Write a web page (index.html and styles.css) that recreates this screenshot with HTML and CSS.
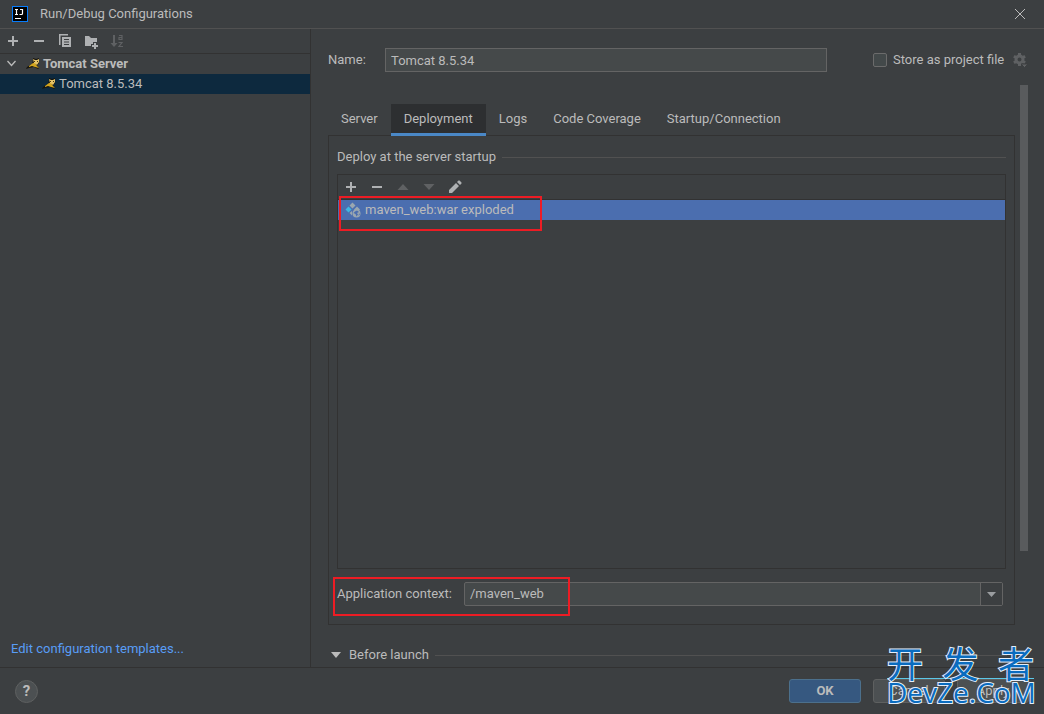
FILE: index.html
```html
<!DOCTYPE html>
<html lang="en">
  <head>
    <meta charset="utf-8">
    <title>Run/Debug Configurations</title>
    <link rel="stylesheet" href="styles.css">
  </head>
  <body>
    <svg class="symbols" xmlns="http://www.w3.org/2000/svg">
      <symbol id="plus" viewBox="0 0 16 16"><path d="M7 3h2v4h4v2H9v4H7V9H3V7h4z"/></symbol>
      <symbol id="minus" viewBox="0 0 16 16"><path d="M3 7h10v2H3z"/></symbol>
      <symbol id="up" viewBox="0 0 16 16"><path d="M2.500 11h11L8 5z"/></symbol>
      <symbol id="down" viewBox="0 0 16 16"><path d="M2.500 5h11L8 11z"/></symbol>
      <symbol id="tomcat" viewBox="0 0 16 16">
        <path fill="#17140d" d="M2 11l5-3 1-4 0-2 3 1 3-1 0 5-2 3 2 2-1 1-4-2-5 1-3 1z"/>
        <path fill="#d2a41e" d="M4 10l4-3 2 0 2 3 2 2-4-1-3-1-3 1z"/>
        <path fill="#e6c468" d="M8 3l2 1h2l2-1v3l-2 3-3-2z"/>
        <path fill="#4a3810" d="M9 5h1v1H9zM12 5h1v1h-1z"/>
      </symbol>
    </svg>

    <div class="dialog">
      <header class="titlebar">
        <svg class="logo" viewBox="0 0 16 16">
          <path fill="#087cfa" d="M0 0h16v16H0z"/>
          <path fill="#000" d="M1 1h14v14H1z"/>
          <path fill="none" stroke="#fff" stroke-width="1.200" d="M3 3.500h3M4.500 3.500v5M3 8.500h3M8 3.500h2.500v4q0 1-1 1H7.500"/>
          <path fill="#fff" d="M3 12h6v1H3z"/>
        </svg>
        <h1 class="title">Run/Debug Configurations</h1>
        <button class="icon-btn" aria-label="Close">
          <svg class="icon" viewBox="0 0 16 16"><path fill="none" stroke="#bbb" d="M3 3l10 10M13 3L3 13"/></svg>
        </button>
      </header>

      <div class="body">
        <aside class="sidebar">
          <div class="toolbar">
            <button class="icon-btn" aria-label="Add"><svg class="icon"><use href="#plus"/></svg></button>
            <button class="icon-btn" aria-label="Remove"><svg class="icon"><use href="#minus"/></svg></button>
            <button class="icon-btn" aria-label="Copy">
              <svg class="icon" viewBox="0 0 16 16"><path d="M2 1h9v1.500H3.500V12H2z"/><path fill-rule="evenodd" d="M5 4h9v10H5zM7 6v1h5V6zM7 8.500v1h5v-1zM7 11v1h5v-1z"/></svg>
            </button>
            <button class="icon-btn" aria-label="New folder">
              <svg class="icon" viewBox="0 0 16 16"><path d="M2 3h4l2 2h6v4h-4v2H8v2H2z"/><path d="M11 10h2v2h2v2h-2v2h-2v-2H9v-2h2z"/></svg>
            </button>
            <button class="icon-btn" aria-label="Sort" disabled>
              <svg class="icon" viewBox="0 0 16 16"><path d="M4 2h2v8h2.500L5 14 1.500 10H4z"/><path fill="none" stroke="currentColor" stroke-width="1.200" d="M10 2.500h3V6.500h-3V4.500h3M9.500 9.500h3.500L10 13.500h4"/></svg>
            </button>
          </div>
          <ul class="tree">
            <li class="node">
              <svg class="icon" viewBox="0 0 16 16"><path fill="none" stroke="currentColor" stroke-width="1.300" d="M3.500 5l4 4.500 4-4.500"/></svg>
              <svg class="icon cat"><use href="#tomcat"/></svg>
              <b>Tomcat Server</b>
            </li>
            <li class="node child selected">
              <svg class="icon cat"><use href="#tomcat"/></svg>
              Tomcat 8.5.34
            </li>
          </ul>
          <a class="templates" href="#">Edit configuration templates...</a>
        </aside>

        <main class="config">
          <div class="name-row">
            <label class="name-label" for="name">Name:</label>
            <input class="field name" type="text" id="name" value="Tomcat 8.5.34">
            <div class="store">
              <input class="check" type="checkbox" id="store">
              <label for="store">Store as project file</label>
              <svg class="icon gear" viewBox="0 0 16 16">
                <circle cx="7.500" cy="7.500" r="3.500" fill="none" stroke="currentColor" stroke-width="3"/>
                <path fill="none" stroke="currentColor" stroke-width="3" d="M7.500 1v3M7.500 11v3M1.900 4.250l2.600 1.500M10.500 9.250l2.600 1.500M1.900 10.750l2.600-1.500M10.500 5.750l2.600-1.500"/>
                <path stroke="#3c3f41" d="M9 12h7l-3.500 3.500z"/>
              </svg>
            </div>
          </div>

          <div class="scroll">
            <div class="content">
              <nav class="tabs">
                <button class="tab">Server</button>
                <button class="tab active">Deployment</button>
                <button class="tab">Logs</button>
                <button class="tab">Code Coverage</button>
                <button class="tab">Startup/Connection</button>
              </nav>

              <section class="panel">
                <h2 class="group">Deploy at the server startup</h2>
                <div class="artifacts">
                  <div class="toolbar">
                    <button class="icon-btn" aria-label="Add"><svg class="icon"><use href="#plus"/></svg></button>
                    <button class="icon-btn" aria-label="Remove"><svg class="icon"><use href="#minus"/></svg></button>
                    <button class="icon-btn" aria-label="Up" disabled><svg class="icon"><use href="#up"/></svg></button>
                    <button class="icon-btn" aria-label="Down" disabled><svg class="icon"><use href="#down"/></svg></button>
                    <button class="icon-btn" aria-label="Edit">
                      <svg class="icon" viewBox="0 0 16 16"><path d="M2 11l7-7 3 3-7 7H2zM10 3l1.500-1.500h1L14.500 3.500v1L13 6z"/></svg>
                    </button>
                  </div>
                  <ul class="list">
                    <li class="artifact">
                      <svg class="icon" viewBox="0 0 16 16">
                        <path fill="#9aa7b0" d="M7.500.5l3 3-3 3-3-3zM12 4.500l3 3-1 1-4 0-1-1z"/>
                        <path fill="#40b6e0" d="M3.500 4.500l3 3-3 3-3-3z"/>
                        <path fill="#9aa7b0" d="M7 9l0 4.500-2.500-2.500z"/>
                        <circle cx="11.500" cy="11.500" r="4" fill="#9aa7b0"/>
                        <path fill="#4b6eaf" d="M10 9.500l2-1 2 1.500-2 1 1 1.500-1.500 2-1-2.500-2-1zM14 11.500l1 .5-1.500 2z"/>
                      </svg>
                      maven_web:war exploded
                      <span class="mark mark-artifact"></span>
                    </li>
                  </ul>
                </div>
                <div class="context">
                  <label class="context-label" for="context">Application context:</label>
                  <div class="combo">
                    <select class="field" id="context"><option>/maven_web</option></select>
                    <svg class="arrow" viewBox="0 0 22 22"><path stroke="#646464" d="M.5 0v22"/><path d="M7 9h9l-4.500 5z"/></svg>
                  </div>
                  <span class="mark mark-context"></span>
                </div>
              </section>

              <h2 class="group before">
                <svg class="icon" viewBox="0 0 16 16"><path d="M3 5h10l-5 6z"/></svg>
                Before launch
              </h2>
            </div>
            <div class="scrollbar"></div>
          </div>
        </main>
      </div>

      <footer class="footer">
        <button class="help" aria-label="Help">?</button>
        <button class="btn primary">OK</button>
        <button class="btn">Cancel</button>
        <button class="btn">Apply</button>
      </footer>
    </div>

    <div class="watermark">
      <div class="watermark-top"><span>开</span><span>发</span><span>者</span></div>
      <div class="watermark-bottom">DevZe.CoM</div>
    </div>
  </body>
</html>
```
FILE: styles.css
```css
* { box-sizing: border-box; }

body
{
  margin: 0;
  background: #3c3f41;
  color: #bbb;
  font: 13px/20px Roboto, "Noto Sans CJK SC", sans-serif;
}

h1, h2 { margin: 0; font: inherit; }
ul     { margin: 0; padding: 0; list-style: none; }
button, input, select { font: inherit; color: inherit; }

.symbols { display: none; }

.dialog
{
  display: flex;
  flex-direction: column;
  height: 100vh;
}

.titlebar
{
  display: flex;
  align-items: center;
  height: 29px;
  padding: 0 16px 0 12px;
  border-bottom: 1px solid #515151;
}

.logo  { width: 16px; height: 16px; }
.title { flex: 1; margin-left: 12px; }

.icon
{
  flex: none;
  width: 16px;
  height: 16px;
  fill: currentColor;
}

.icon-btn
{
  display: flex;
  padding: 0;
  border: 0;
  background: none;
  color: #afb1b3;
}

.icon-btn:disabled { color: #5f6163; }

.body
{
  display: flex;
  flex: 1;
  min-height: 0;
}

/* left side: configurations tree */
.sidebar
{
  display: flex;
  flex-direction: column;
  width: 311px;
  border-right: 1px solid #323232;
}

.toolbar
{
  display: flex;
  align-items: center;
  gap: 10px;
  height: 25px;
  padding: 0 5px;
  border-bottom: 1px solid #323232;
}

.tree { flex: 1; }

.node
{
  display: flex;
  align-items: center;
  height: 20px;
  padding-left: 4px;
}

.node .cat { margin-left: 5px; margin-right: 2px; }
.child     { padding-left: 36px; }
.selected  { background: #0d293e; }

.templates
{
  padding: 0 11px 8px;
  color: #589df6;
  text-decoration: none;
}

/* right side: selected configuration */
.config
{
  display: flex;
  flex: 1;
  flex-direction: column;
  padding: 19px 16px 0 17px;
}

.name-row
{
  display: flex;
  align-items: center;
}

.name-label { width: 57px; }

.field
{
  width: 100%;
  height: 24px;
  padding: 0 5px;
  border: 1px solid #646464;
  border-radius: 0;
  background: #45494a;
}

.name { flex: 1; }

.store
{
  display: flex;
  align-items: center;
  width: 155px;
  margin-left: 46px;
}

.check
{
  appearance: none;
  width: 14px;
  height: 14px;
  margin: 0 6px 0 0;
  border: 1px solid #6b6b6b;
  border-radius: 2px;
  background: #43494a;
}

.gear { margin-left: auto; color: #5f6163; }

.scroll
{
  display: flex;
  flex: 1;
  gap: 5px;
  margin-top: 13px;
}

.content
{
  display: flex;
  flex: 1;
  flex-direction: column;
  padding-top: 19px;
}

.scrollbar
{
  width: 8px;
  height: 80%;
  background: #595b5d;
}

.tabs
{
  display: flex;
  z-index: 1;
}

.tab
{
  height: 32px;
  padding: 0 13px 3px;
  border: 0;
  background: none;
}

.tab.active
{
  background: #2d2f31;
  box-shadow: inset 0 -3px #4a88c7;
}

.panel
{
  display: flex;
  flex: 1;
  flex-direction: column;
  margin-top: -1px;
  padding: 11px 8px 18px;
  border: 1px solid #323232;
}

.group
{
  display: flex;
  align-items: center;
}

.group::after
{
  content: "";
  flex: 1;
  margin-left: 6px;
  border-top: 1px solid #515151;
}

.artifacts
{
  flex: 1;
  margin-top: 7px;
  border: 1px solid #323232;
}

.artifact
{
  display: flex;
  position: relative;
  align-items: center;
  gap: 4px;
  height: 20px;
  padding-left: 7px;
  background: #4b6eaf;
}

.context
{
  display: flex;
  position: relative;
  align-items: center;
  margin-top: 13px;
  padding-right: 3px;
}

.context-label { min-width: 127px; }

.combo
{
  position: relative;
  flex: 1;
}

.combo .field
{
  display: block;
  appearance: none;
  border-radius: 2px;
}

.arrow
{
  position: absolute;
  top: 1px;
  right: 1px;
  width: 22px;
  height: 22px;
  background: #3c3f41;
  fill: #9a9da0;
  pointer-events: none;
}

/* red frames over the two important places */
.mark
{
  position: absolute;
  border: 2px solid #ed1c24;
}

.mark-artifact
{
  top: -4px;
  left: 1px;
  width: 203px;
  height: 35px;
}

.mark-context
{
  top: -5px;
  left: -4px;
  width: 237px;
  height: 39px;
}

.before { padding: 20px 8px 2px 0; }
.before .icon { margin-right: 5px; }

.footer
{
  display: flex;
  align-items: center;
  gap: 12px;
  height: 47px;
  padding: 0 15px;
  border-top: 1px solid #323232;
}

.help
{
  width: 23px;
  height: 23px;
  margin-right: auto;
  padding: 0;
  border: 1px solid #5e6060;
  border-radius: 50%;
  background: #4c5052;
  font-size: 15px;
  font-weight: bold;
  line-height: 20px;
}

.btn
{
  width: 72px;
  height: 24px;
  padding: 0;
  border: 1px solid #5e6060;
  border-radius: 3px;
  background: #4c5052;
}

.primary
{
  border-color: #4c708c;
  background: #365880;
  font-weight: bold;
}

.watermark
{
  position: absolute;
  right: 10px;
  bottom: 9px;
  width: 147px;
  color: #0a6cbf;
  -webkit-text-stroke: 2px #e4eefa;
  paint-order: stroke fill;
}

.watermark-top
{
  display: flex;
  justify-content: space-between;
  height: 32px;
  border-bottom: 1px solid #5cc8e8;
  font: 36px/30px "Noto Sans CJK SC", sans-serif;
}

.watermark-bottom
{
  font: 28px/26px "Open Sans", sans-serif;
}
```
